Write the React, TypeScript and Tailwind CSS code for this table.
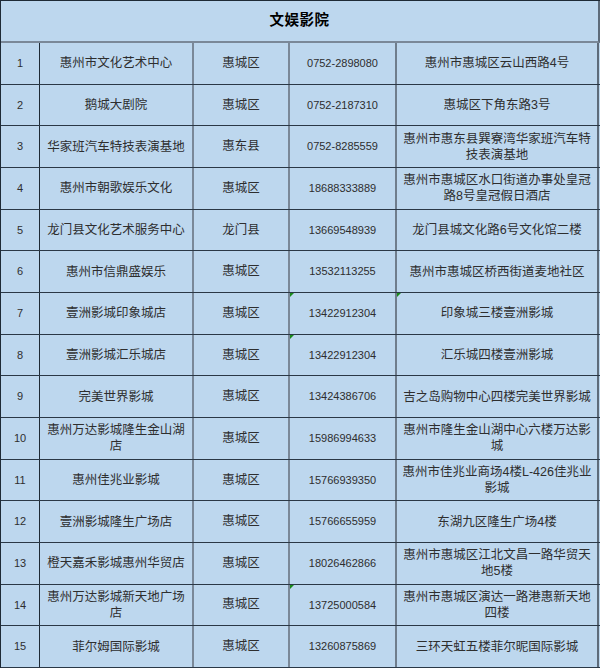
import React from "react";

type Row = {
  n: number;
  name: string;
  area: string;
  phone: string;
  addr: string;
  mark?: boolean;
  markAddr?: boolean;
};

const rows: Row[] = [
  { n: 1, name: "惠州市文化艺术中心", area: "惠城区", phone: "0752-2898080", addr: "惠州市惠城区云山西路4号" },
  { n: 2, name: "鹅城大剧院", area: "惠城区", phone: "0752-2187310", addr: "惠城区下角东路3号" },
  { n: 3, name: "华家班汽车特技表演基地", area: "惠东县", phone: "0752-8285559", addr: "惠州市惠东县巽寮湾华家班汽车特技表演基地" },
  { n: 4, name: "惠州市朝歌娱乐文化", area: "惠城区", phone: "18688333889", addr: "惠州市惠城区水口街道办事处皇冠路8号皇冠假日酒店" },
  { n: 5, name: "龙门县文化艺术服务中心", area: "龙门县", phone: "13669548939", addr: "龙门县城文化路6号文化馆二楼" },
  { n: 6, name: "惠州市信鼎盛娱乐", area: "惠城区", phone: "13532113255", addr: "惠州市惠城区桥西街道麦地社区" },
  { n: 7, name: "壹洲影城印象城店", area: "惠城区", phone: "13422912304", addr: "印象城三楼壹洲影城", mark: true, markAddr: true },
  { n: 8, name: "壹洲影城汇乐城店", area: "惠城区", phone: "13422912304", addr: "汇乐城四楼壹洲影城", mark: true },
  { n: 9, name: "完美世界影城", area: "惠城区", phone: "13424386706", addr: "吉之岛购物中心四楼完美世界影城" },
  { n: 10, name: "惠州万达影城隆生金山湖店", area: "惠城区", phone: "15986994633", addr: "惠州市隆生金山湖中心六楼万达影城" },
  { n: 11, name: "惠州佳兆业影城", area: "惠城区", phone: "15766939350", addr: "惠州市佳兆业商场4楼L-426佳兆业影城" },
  { n: 12, name: "壹洲影城隆生广场店", area: "惠城区", phone: "15766655959", addr: "东湖九区隆生广场4楼" },
  { n: 13, name: "橙天嘉禾影城惠州华贸店", area: "惠城区", phone: "18026462866", addr: "惠州市惠城区江北文昌一路华贸天地5楼" },
  { n: 14, name: "惠州万达影城新天地广场店", area: "惠城区", phone: "13725000584", addr: "惠州市惠城区演达一路港惠新天地四楼", mark: true },
  { n: 15, name: "菲尔姆国际影城", area: "惠城区", phone: "13260875869", addr: "三环天虹五楼菲尔昵国际影城" },
];

const Mark = () => (
  <span className="absolute left-0 top-0 w-0 h-0 border-t-[4px] border-r-[4px] border-t-[#1a8a1a] border-r-transparent" />
);

export default function App() {
  return (
    <div
      className="w-[600px] h-[668px] overflow-hidden bg-[#bdd7ee] text-[#2e2e2e] border-l border-t border-[#1e2a36]"
      style={{ fontFamily: '"Liberation Sans", "Noto Sans CJK SC", sans-serif' }}
    >
      <div className="h-[42px] border-b-2 border-r-2 border-b-[#7a8898] border-r-[#5d6b7a] flex items-center justify-center">
        <span className="text-[14.5px] font-bold text-black tracking-[0.5px]">文娱影院</span>
      </div>
      {rows.map((r) => (
        <div key={r.n} className="h-[41.67px] flex border-b border-[#2a3846]">
          <div className="w-[39px] shrink-0 border-r border-[#1e2a36] flex items-center justify-center text-[11px]">
            {r.n}
          </div>
          <div className="w-[154px] shrink-0 border-r-2 border-[#7a8898] flex items-center justify-center text-center px-[5px] text-[12.5px] leading-[16px]">
            {r.name}
          </div>
          <div className="w-[96px] shrink-0 border-r-2 border-[#7a8898] flex items-center justify-center text-[12.5px]">
            {r.area}
          </div>
          <div className="relative w-[107px] shrink-0 border-r-2 border-[#6f7d8c] flex items-center justify-center text-[11px]">
            {r.mark && <Mark />}
            {r.phone}
          </div>
          <div className="relative w-[202px] shrink-0 border-r-2 border-[#5d6b7a] flex items-center justify-center text-center px-[5px] text-[12.5px] leading-[16px]">
            {r.markAddr && <Mark />}
            {r.addr}
          </div>
        </div>
      ))}
    </div>
  );
}
